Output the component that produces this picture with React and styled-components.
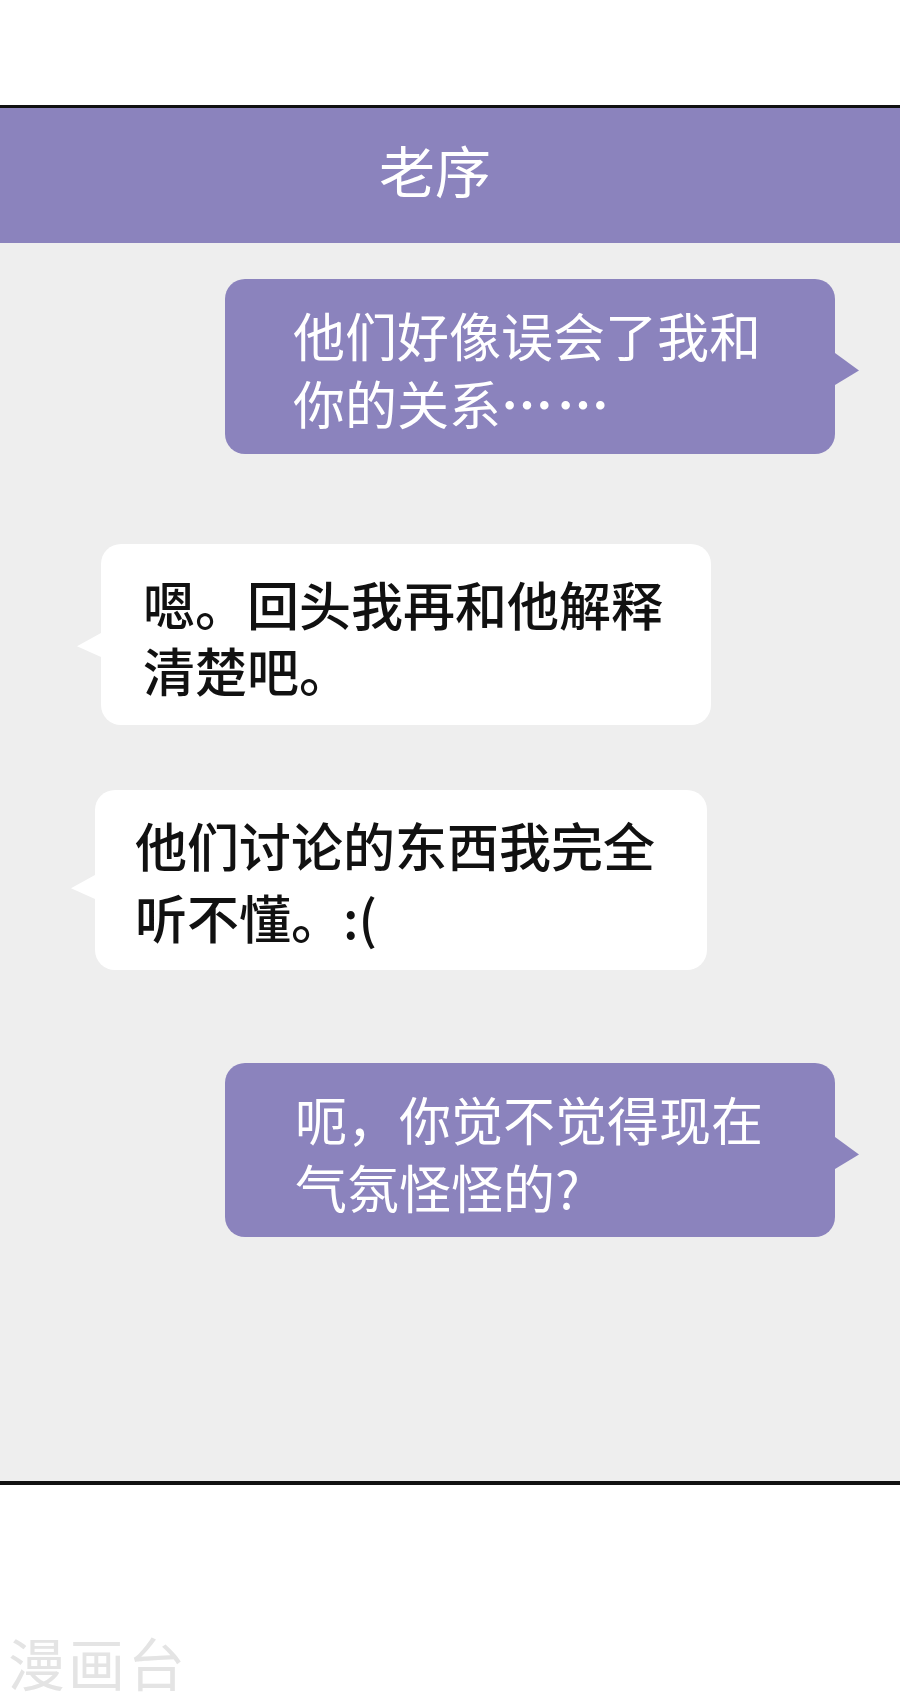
import React from 'react'
import styled, { createGlobalStyle } from 'styled-components'

const GlobalStyle = createGlobalStyle`
  body {
    margin: 0;
    background: #ffffff;
    font-family: "Noto Sans CJK SC", "Noto Sans", sans-serif;
  }
`

const Purple = '#8b83bd'

const Page = styled.div`
  width: 900px;
  height: 1699px;
  display: flex;
  flex-direction: column;
  background: #ffffff;
`

const TopSpace = styled.div`
  height: 105px;
  flex-shrink: 0;
`

const Panel = styled.div`
  border-top: 3px solid #111;
  border-bottom: 4px solid #111;
  display: flex;
  flex-direction: column;
`

const Header = styled.div`
  height: 135px;
  box-sizing: border-box;
  background: ${Purple};
  color: #ffffff;
  font-size: 56px;
  display: flex;
  align-items: center;
  justify-content: center;
  padding: 0 30px 14px 0;
`

const ChatArea = styled.div`
  height: 1238px;
  background: #eeeeee;
  display: flex;
  flex-direction: column;
  box-sizing: border-box;
  padding-top: 36px;
`

const Bubble = styled.div`
  position: relative;
  box-sizing: border-box;
  margin-top: ${(props) => props.gap || 0}px;
  margin-left: ${(props) => props.left}px;
  width: ${(props) => props.width}px;
  height: ${(props) => props.height}px;
  padding: ${(props) => props.padTop}px 0 0 ${(props) => props.padLeft}px;
  border-radius: 20px;
  background: ${(props) => (props.mine ? Purple : '#ffffff')};
  color: ${(props) => (props.mine ? '#ffffff' : '#111111')};
  font-size: 52px;
  font-weight: ${(props) => (props.mine ? 400 : 500)};
  line-height: ${(props) => props.lineHeight}px;
  white-space: nowrap;

  &::after {
    content: '';
    position: absolute;
    top: ${(props) => props.tailTop}px;
    ${(props) => (props.mine ? 'left: 100%;' : 'right: 100%;')}
    width: 24px;
    height: ${(props) => props.tailHeight}px;
    background: inherit;
    clip-path: ${(props) =>
      props.mine
        ? 'polygon(0 0, 100% 55%, 0 100%)'
        : 'polygon(100% 0, 0 55%, 100% 100%)'};
  }
`

const Line = styled.div`
  height: ${(props) => props.h}px;
`

const Ellipsis = styled.span`
  font-weight: 700;
  letter-spacing: 4px;
`

const Footer = styled.div`
  flex: 1;
  display: flex;
  align-items: flex-end;
  padding: 0 0 4px 8px;
`

const Watermark = styled.div`
  color: #e4e4e4;
  font-size: 57px;
  line-height: 68px;
  letter-spacing: 3px;
`

const messages = [
  {
    mine: true,
    gap: 0,
    left: 225,
    width: 610,
    height: 175,
    padTop: 22,
    padLeft: 68,
    lineHeight: 68,
    tailTop: 74,
    tailHeight: 32,
    lines: ['他们好像误会了我和', <>你的关系<Ellipsis>……</Ellipsis></>],
  },
  {
    mine: false,
    gap: 90,
    left: 101,
    width: 610,
    height: 181,
    padTop: 27,
    padLeft: 42,
    lineHeight: 66,
    tailTop: 89,
    tailHeight: 24,
    lines: ['嗯。回头我再和他解释', '清楚吧。'],
  },
  {
    mine: false,
    gap: 65,
    left: 95,
    width: 612,
    height: 180,
    padTop: 19,
    padLeft: 40,
    lineHeight: 72,
    tailTop: 85,
    tailHeight: 24,
    lines: ['他们讨论的东西我完全', '听不懂。:('],
  },
  {
    mine: true,
    gap: 93,
    left: 225,
    width: 610,
    height: 174,
    padTop: 22,
    padLeft: 70,
    lineHeight: 68,
    tailTop: 74,
    tailHeight: 32,
    lines: ['呃，你觉不觉得现在', '气氛怪怪的?'],
  },
]

export default function App() {
  return (
    <Page>
      <GlobalStyle />
      <TopSpace />
      <Panel>
        <Header>老序</Header>
        <ChatArea>
          {messages.map((m, i) => (
            <Bubble key={i} {...m}>
              {m.lines.map((line, j) => (
                <Line key={j} h={m.lineHeight}>{line}</Line>
              ))}
            </Bubble>
          ))}
        </ChatArea>
      </Panel>
      <Footer>
        <Watermark>漫画台</Watermark>
      </Footer>
    </Page>
  )
}
